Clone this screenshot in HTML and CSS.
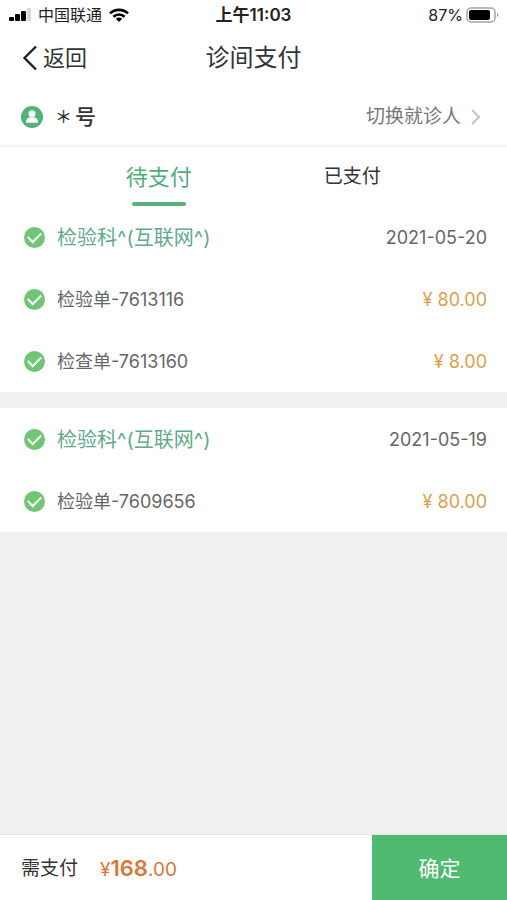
FILE: index.html
```html
<!DOCTYPE html>
<html lang="zh-CN">
<head>
<meta charset="utf-8">
<meta name="viewport" content="width=device-width, initial-scale=1">
<title>诊间支付</title>
<link rel="stylesheet" href="styles.css">
</head>
<body>
<div class="status">
  <div class="status-side">
    <svg width="23" height="14" viewBox="0 0 23 14" aria-hidden="true"><rect x="1" y="9" width="5" height="4" rx="1"/><rect x="7" y="6" width="5" height="7" rx="1"/><rect x="13" y="3" width="5" height="10" rx="1"/><rect x="19" width="4" height="13" rx="1" fill="#d9d9d9"/></svg>
    <span>中国联通</span>
    <svg width="20" height="14" viewBox="0 0 20 14" aria-hidden="true"><g fill="none" stroke="#000" stroke-width="2.7"><path d="M1 5.400a13 13 0 0 1 18 0"/><path d="M4.400 8.800a8 8 0 0 1 11.200 0"/></g><path d="M6.800 10.800a4.600 4.600 0 0 1 6.400 0L10 14z"/></svg>
  </div>
  <span class="status-time">上午11:03</span>
  <div class="status-side status-right">
    <span>87%</span>
    <svg width="33" height="17" viewBox="0 0 33 17" aria-hidden="true"><rect x="1" y="1" width="28" height="14" rx="4" fill="#fff" stroke="#a5a5a5" stroke-width="1.5"/><rect x="3" y="3" width="21" height="10" rx="2"/><path d="M31 6c2 .8 2 3.200 0 4z" fill="#a5a5a5"/></svg>
  </div>
</div>
<header class="nav">
  <a class="back" href="#"><svg width="16" height="26" viewBox="0 0 16 26" aria-hidden="true"><path d="M14 1.500 2.500 13 14 24.500" fill="none" stroke="#222" stroke-width="2.400"/></svg>返回</a>
  <h1 class="title">诊间支付</h1>
</header>
<section class="patient">
  <svg width="22" height="22" viewBox="0 0 22 22" aria-hidden="true"><circle cx="11" cy="11" r="11" fill="#4fb477"/><circle cx="11" cy="7.700" r="3.500" fill="#fff"/><path d="M5 15.500c0-3 2.200-4 4.300-4.300h3.400c2.100.3 4.300 1.300 4.300 4.300 0 1-.5 1.300-1.300 1.300H6.300C5.500 16.800 5 16.500 5 15.500z" fill="#fff"/></svg>
  <span class="patient-name"><span class="mask">＊</span>号</span>
  <a class="switch" href="#">切换就诊人<svg width="10" height="16" viewBox="0 0 10 16" aria-hidden="true"><path d="m1 1 7 7-7 7" fill="none" stroke="#c4c4c4" stroke-width="2"/></svg></a>
</section>
<nav class="tabs">
  <button class="tab tab-active" type="button">待支付</button>
  <button class="tab" type="button">已支付</button>
</nav>
<main class="bills">
  <section class="bill">
    <label class="row row-head"><input class="check" type="checkbox" checked><span class="name">检验科^(互联网^)</span><time class="date">2021-05-20</time></label>
    <label class="row"><input class="check" type="checkbox" checked><span class="name">检验单-7613116</span><span class="price">¥ 80.00</span></label>
    <label class="row"><input class="check" type="checkbox" checked><span class="name">检查单-7613160</span><span class="price">¥ 8.00</span></label>
  </section>
  <section class="bill">
    <label class="row row-head"><input class="check" type="checkbox" checked><span class="name">检验科^(互联网^)</span><time class="date">2021-05-19</time></label>
    <label class="row"><input class="check" type="checkbox" checked><span class="name">检验单-7609656</span><span class="price">¥ 80.00</span></label>
  </section>
</main>
<footer class="pay">
  <div class="total"><span>需支付</span><span class="amount">¥<strong>168</strong>.00</span></div>
  <button class="confirm" type="button">确定</button>
</footer>
</body>
</html>
```
FILE: styles.css
```css
* { box-sizing: border-box; }

body {
  margin: 0;
  min-height: 100vh;
  display: flex;
  flex-direction: column;
  background: #f0f0f0;
  color: #333;
  font-family: Inter, "Noto Sans CJK SC", sans-serif;
  font-size: 18px;
  line-height: 24px;
}

svg { display: block; flex: none; }
a { color: inherit; text-decoration: none; }
button { border: 0; padding: 0; background: none; color: inherit; font: inherit; }

.status {
  display: grid;
  grid-template-columns: 1fr auto 1fr;
  align-items: center;
  height: 30px;
  padding: 0 8px;
  background: #fff;
  color: #222;
  font-size: 16px;
}
.status-side { display: flex; align-items: center; gap: 7px; }
.status-right { justify-content: flex-end; gap: 3px; }
.status-time { font-size: 17px; font-weight: 600; }

.nav {
  display: grid;
  grid-template-columns: 1fr auto 1fr;
  align-items: center;
  height: 56px;
  padding: 0 22px;
  background: #fff;
}
.back { display: flex; align-items: center; gap: 5px; font-size: 22px; }
.title { margin: 0; font-size: 24px; font-weight: 400; }

.patient {
  display: flex;
  align-items: center;
  height: 61px;
  padding: 2px 26px 0 21px;
  border-bottom: 2px solid #f3f3f3;
  background: #fff;
}
.patient-name { display: flex; align-items: center; gap: 3px; margin-left: 12px; font-size: 21px; font-weight: 500; }
.mask { font-size: 17px; }
.switch {
  display: flex;
  align-items: center;
  gap: 10px;
  margin-left: auto;
  color: #777;
  font-size: 19px;
}

.tabs {
  display: grid;
  grid-template-columns: 1fr 1fr;
  padding: 0 58px 0 62px;
  height: 59px;
  background: #fff;
}
.tab {
  display: flex;
  flex-direction: column;
  align-items: center;
  justify-content: space-between;
  padding-top: 18px;
  font-size: 19px;
}
.tab-active { color: #4fae7b; font-size: 22px; }
.tab-active::after {
  content: "";
  width: 54px;
  height: 4px;
  border-radius: 2px;
  background: #55b07c;
}

.bills { flex: 1; display: flex; flex-direction: column; gap: 16px; }
.bill { background: #fff; }
.row {
  display: flex;
  align-items: center;
  height: 62px;
  padding: 0 20px 0 24px;
  color: #666;
  line-height: 26px;
}
.row-head .name { color: #5fab88; font-size: 20px; }
.name, .date, .price { padding-top: 2px; }
.check {
  appearance: none;
  flex: none;
  width: 21px;
  height: 21px;
  margin: 0 12px 0 0;
  border: 1px solid #ccc;
  border-radius: 50%;
}
.check:checked {
  display: grid;
  place-items: center;
  border: 0;
  background: #70c674;
}
.check:checked::after {
  content: "";
  width: 11px;
  height: 6px;
  margin-bottom: 3px;
  border: solid #fff;
  border-width: 0 0 2px 2px;
  transform: rotate(-45deg);
}
.date, .price { margin-left: auto; }
.price { color: #dca04c; }

.pay {
  display: flex;
  height: 66px;
  border-top: 1px solid #e4e4e4;
  background: #fff;
}
.total { flex: 1; display: flex; align-items: center; gap: 22px; padding: 2px 0 0 21px; font-size: 19px; }
.amount { color: #d5793c; }
.amount strong { font-size: 22px; font-weight: 600; }
.confirm { width: 135px; padding-top: 2px; background: #50bb70; color: #fff; font-size: 21px; }
```
